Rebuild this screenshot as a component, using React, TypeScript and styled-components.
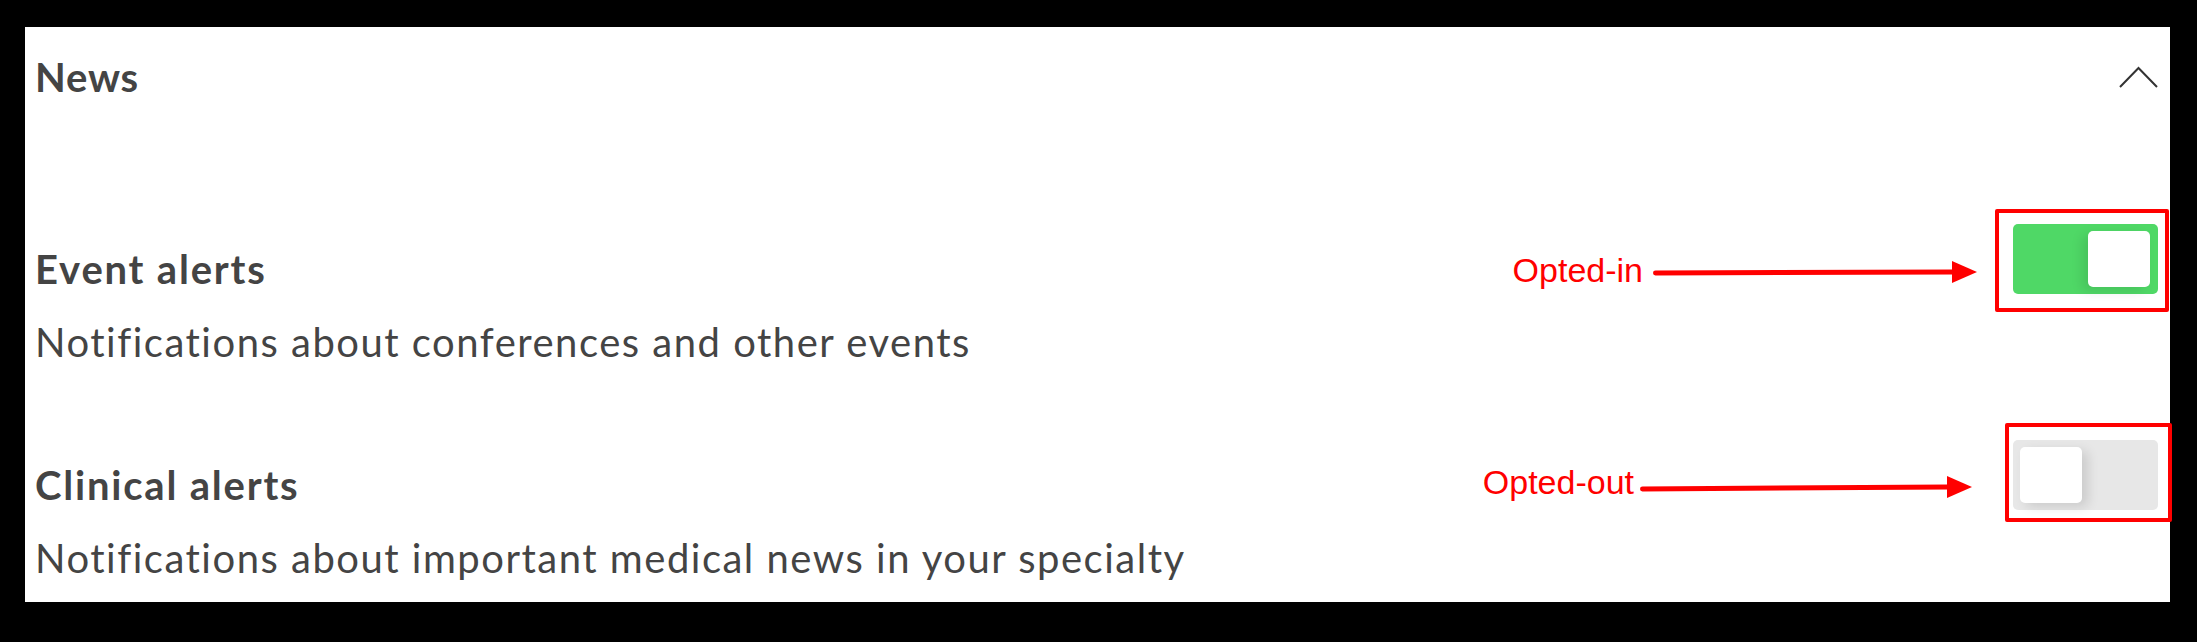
import React from "react";
import styled, { createGlobalStyle } from "styled-components";

const Global = createGlobalStyle`
  html, body { margin: 0; padding: 0; background: #000; }
  body { width: 2197px; height: 642px; overflow: hidden; }
  * { box-sizing: border-box; }
`;

const Panel = styled.section`
  margin: 27px 0 0 25px;
  width: 2145px;
  height: 575px;
  background: #fff;
  padding: 26px 12px 0 10px;
  font-family: Lato, "Noto Sans", sans-serif;
  color: #444;
`;

const Header = styled.header`
  display: flex;
  align-items: center;
  justify-content: space-between;
  height: 48px;
`;

const Title = styled.h2`
  margin: 0;
  font-size: 40px;
  line-height: 48px;
  font-weight: 700;
  letter-spacing: 0.8px;
`;

const Chevron = styled.svg`
  width: 39px;
  height: 24px;
  margin-right: 0;
`;

const List = styled.div`
  margin-top: 123px;
  display: flex;
  flex-direction: column;
  gap: 74px;
`;

const Row = styled.div`
  display: flex;
  justify-content: space-between;
  align-items: flex-start;
`;

const Text = styled.div`
  padding-top: 21px;
  display: flex;
  flex-direction: column;
  gap: 25px;
`;

const Heading = styled.h3`
  margin: 0;
  font-size: 40px;
  line-height: 48px;
  font-weight: 700;
  letter-spacing: 1.8px;
`;

const Desc = styled.p`
  margin: 0;
  font-size: 40px;
  line-height: 48px;
  font-weight: 400;
  letter-spacing: 1.5px;
`;

const ToggleWrap = styled.div`
  position: relative;
`;

const Track = styled.div<{ $on: boolean }>`
  width: 145px;
  height: 70px;
  border-radius: 5px;
  background: ${(p) => (p.$on ? "#4fd866" : "#e7e7e7")};
  padding: 7px;
  display: flex;
  justify-content: ${(p) => (p.$on ? "flex-end" : "flex-start")};
`;

const Knob = styled.div<{ $on: boolean }>`
  width: 62px;
  height: 56px;
  border-radius: 5px;
  background: #fff;
  margin-right: ${(p) => (p.$on ? "1px" : "0")};
  box-shadow: ${(p) =>
    p.$on
      ? "-6px 4px 12px rgba(0,0,0,0.10)"
      : "6px 4px 12px rgba(0,0,0,0.12)"};
`;

const RedBox = styled.div<{ $t: number; $r: number; $b: number; $l: number }>`
  position: absolute;
  top: ${(p) => -p.$t}px;
  right: ${(p) => -p.$r}px;
  bottom: ${(p) => -p.$b}px;
  left: ${(p) => -p.$l}px;
  border: 4px solid #ff0000;
  border-radius: 2px;
  pointer-events: none;
`;

const Annotation = styled.div<{ $top: number; $gap: number }>`
  position: absolute;
  top: ${(p) => p.$top}px;
  right: calc(100% + ${(p) => p.$gap}px);
  display: flex;
  align-items: flex-start;
  white-space: nowrap;
`;

const Label = styled.span<{ $space: number }>`
  font-family: "Liberation Sans", Arial, sans-serif;
  font-size: 34px;
  line-height: 40px;
  color: #ff0000;
  margin-right: ${(p) => p.$space}px;
`;

type Arrow = { w: number; y1: number; y2: number };

const ArrowSvg = ({ w, y1, y2 }: Arrow) => (
  <svg width={w} height={40} viewBox={`0 0 ${w} 40`}>
    <line
      x1={2.5}
      y1={y1}
      x2={w - 24}
      y2={y2}
      stroke="#ff0000"
      strokeWidth={5}
      strokeLinecap="round"
    />
    <polygon
      points={`${w - 25},${y2 - 11} ${w},${y2} ${w - 25},${y2 + 11}`}
      fill="#ff0000"
    />
  </svg>
);

type Item = {
  title: string;
  desc: string;
  on: boolean;
  note: string;
  top: number;
  gap: number;
  space: number;
  arrow: Arrow;
  box: [number, number, number, number];
};

const items: Item[] = [
  {
    title: "Event alerts",
    desc: "Notifications about conferences and other events",
    on: true,
    note: "Opted-in",
    top: 26,
    gap: 36,
    space: 10,
    arrow: { w: 324, y1: 23, y2: 22 },
    box: [15, 11, 18, 18],
  },
  {
    title: "Clinical alerts",
    desc: "Notifications about important medical news in your specialty",
    on: false,
    note: "Opted-out",
    top: 22,
    gap: 41,
    space: 6,
    arrow: { w: 332, y1: 27, y2: 25 },
    box: [17, 14, 12, 8],
  },
];

export default function App() {
  return (
    <>
      <Global />
      <Panel>
        <Header>
          <Title>News</Title>
          <Chevron viewBox="0 0 39 24">
            <polyline
              points="1,22 19.5,3 38,22"
              fill="none"
              stroke="#333"
              strokeWidth={2}
            />
          </Chevron>
        </Header>
        <List>
          {items.map((it) => (
            <Row key={it.title}>
              <Text>
                <Heading>{it.title}</Heading>
                <Desc>{it.desc}</Desc>
              </Text>
              <ToggleWrap>
                <Track $on={it.on} role="switch" aria-checked={it.on}>
                  <Knob $on={it.on} />
                </Track>
                <RedBox $t={it.box[0]} $r={it.box[1]} $b={it.box[2]} $l={it.box[3]} />
                <Annotation $top={it.top} $gap={it.gap}>
                  <Label $space={it.space}>{it.note}</Label>
                  <ArrowSvg {...it.arrow} />
                </Annotation>
              </ToggleWrap>
            </Row>
          ))}
        </List>
      </Panel>
    </>
  );
}
